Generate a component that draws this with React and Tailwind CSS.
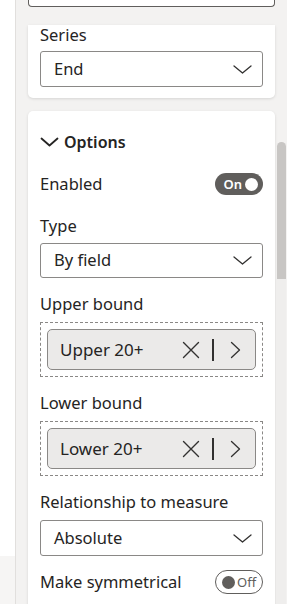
import React from "react";

const font = { fontFamily: '"Noto Sans", "Open Sans", sans-serif' };

function ChevronDown({ className = "" }) {
  return (
    <svg className={className} width="19" height="9" viewBox="0 0 19 9" fill="none">
      <path d="M1 1 L9.5 8 L18 1" stroke="#323130" strokeWidth="1.3" strokeLinejoin="round" strokeLinecap="round" />
    </svg>
  );
}

function Dropdown({ value, h = "h-[36px]" }) {
  return (
    <div className={`flex items-center justify-between ${h} border border-[#8a8886] rounded-[3px] bg-white pl-[13px] pr-[10px]`}>
      <span className="text-[16.5px] text-[#252423] leading-none">{value}</span>
      <ChevronDown />
    </div>
  );
}

function Label({ children, className = "" }) {
  return <div className={`h-[20px] leading-[20px] text-[16.5px] text-[#252423] ${className}`}>{children}</div>;
}

function FieldWell({ value, className = "" }) {
  return (
    <div className={`border border-dashed border-[#8a8886] p-[6px] ${className}`}>
      <div className="flex items-center h-[41px] rounded-[5px] border border-[#8a8886] bg-[#ebeae9] pl-[12px] pr-[14px]">
        <span className="flex-1 text-[17px] text-[#252423] leading-none">{value}</span>
        <svg width="18" height="18" viewBox="0 0 18 18" fill="none">
          <path d="M1.5 1.5 L16.5 16.5 M16.5 1.5 L1.5 16.5" stroke="#323130" strokeWidth="1.4" strokeLinecap="round" />
        </svg>
        <div className="ml-[12px] w-[2px] h-[22px] bg-[#323130]" />
        <svg className="ml-[16px]" width="11" height="18" viewBox="0 0 11 18" fill="none">
          <path d="M1.5 1.5 L9.5 9 L1.5 16.5" stroke="#323130" strokeWidth="1.3" strokeLinecap="round" strokeLinejoin="round" />
        </svg>
      </div>
    </div>
  );
}

function ToggleOn() {
  return (
    <div className="flex items-center justify-end gap-[3px] w-[48px] h-[22px] rounded-full bg-[#605e5c] pr-[5px]">
      <span className="text-[13px] font-semibold text-white leading-none">On</span>
      <div className="w-[13px] h-[13px] rounded-full bg-white" />
    </div>
  );
}

function ToggleOff() {
  return (
    <div className="flex items-center gap-[2px] w-[48px] h-[24px] rounded-full border border-[#605e5c] bg-white pl-[6px]">
      <div className="w-[13px] h-[13px] rounded-full bg-[#605e5c]" />
      <span className="text-[13px] text-[#605e5c] leading-none">Off</span>
    </div>
  );
}

export default function App() {
  return (
    <div className="flex w-[287px] h-[604px] overflow-hidden bg-[#f3f2f1]" style={font}>
      {/* left strip */}
      <div className="flex flex-col w-[16px] border-r border-[#e1dfdd]">
        <div className="h-[556px] bg-white" />
        <div className="flex-1 bg-[#f6f5f4]" />
      </div>

      {/* content */}
      <div className="flex-1 pl-[12px] pr-[2px]">
        <div className="h-[7px] bg-white border-x border-b border-[#605e5c] rounded-b-[4px]" />

        {/* card 1 */}
        <div className="mt-[18px] bg-white rounded-b-[5px] shadow-[0_1px_3px_rgba(0,0,0,0.12)] px-[12px] pb-[11px]">
          <Label>Series</Label>
          <div className="mt-[6px]">
            <Dropdown value="End" />
          </div>
        </div>

        {/* card 2 */}
        <div className="mt-[13px] bg-white rounded-t-[5px] shadow-[0_1px_3px_rgba(0,0,0,0.12)] px-[12px] pt-[20px] pb-[30px]">
          <div className="flex items-center h-[22px]">
            <svg width="19" height="10" viewBox="0 0 19 10" fill="none">
              <path d="M1.5 1.5 L9.5 8.5 L17.5 1.5" stroke="#252423" strokeWidth="1.8" strokeLinecap="round" strokeLinejoin="round" />
            </svg>
            <span className="ml-[5px] text-[16px] font-semibold text-[#252423] leading-none">Options</span>
          </div>

          <div className="mt-[20px] flex items-center justify-between h-[22px]">
            <span className="text-[16.5px] text-[#252423] leading-none">Enabled</span>
            <ToggleOn />
          </div>

          <Label className="mt-[21px]">Type</Label>
          <div className="mt-[7px]">
            <Dropdown value="By field" h="h-[35px]" />
          </div>

          <Label className="mt-[16px]">Upper bound</Label>
          <FieldWell className="mt-[8px]" value="Upper 20+" />

          <Label className="mt-[16px]">Lower bound</Label>
          <FieldWell className="mt-[8px]" value="Lower 20+" />

          <Label className="mt-[16px]">Relationship to measure</Label>
          <div className="mt-[8px]">
            <Dropdown value="Absolute" />
          </div>

          <div className="mt-[14px] flex items-center justify-between h-[24px]">
            <span className="text-[16.5px] text-[#252423] leading-none">Make symmetrical</span>
            <ToggleOff />
          </div>
        </div>
      </div>

      {/* scrollbar */}
      <div className="w-[10px] pt-[142px]">
        <div className="h-[137px] w-[9px] rounded-t-full bg-[#c8c6c4]" />
        <div className="h-[325px] w-[9px] bg-[#efeeed]" />
      </div>
    </div>
  );
}
